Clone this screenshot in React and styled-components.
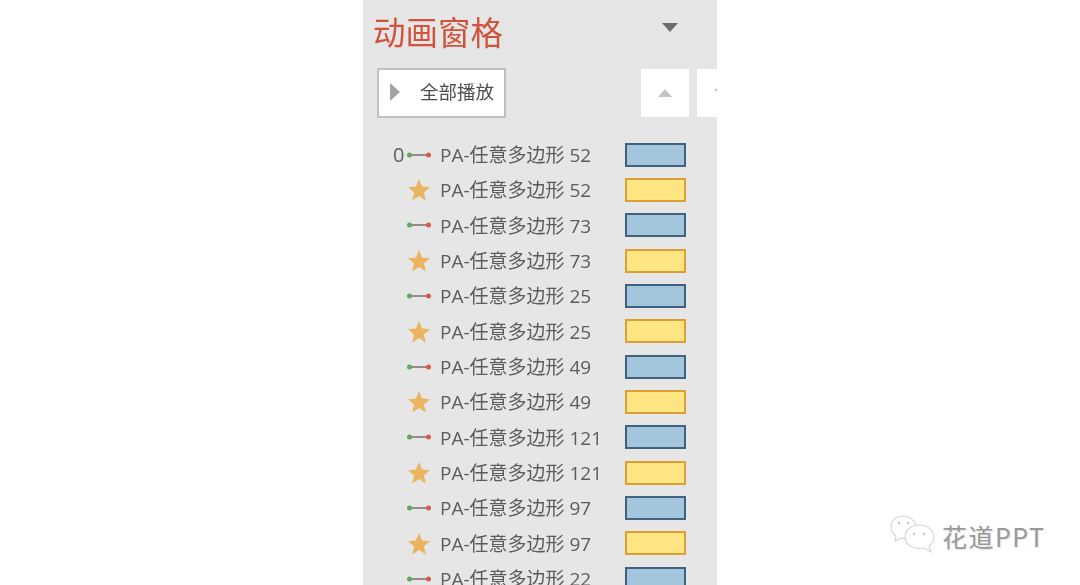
import React from "react";
import styled, { createGlobalStyle } from "styled-components";

const rows = [
  { type: "move", name: "PA-任意多边形 52", delay: "0" },
  { type: "star", name: "PA-任意多边形 52" },
  { type: "move", name: "PA-任意多边形 73" },
  { type: "star", name: "PA-任意多边形 73" },
  { type: "move", name: "PA-任意多边形 25" },
  { type: "star", name: "PA-任意多边形 25" },
  { type: "move", name: "PA-任意多边形 49" },
  { type: "star", name: "PA-任意多边形 49" },
  { type: "move", name: "PA-任意多边形 121" },
  { type: "star", name: "PA-任意多边形 121" },
  { type: "move", name: "PA-任意多边形 97" },
  { type: "star", name: "PA-任意多边形 97" },
  { type: "move", name: "PA-任意多边形 22" },
];

const PathIcon = () => (
  <svg width="24" height="8" viewBox="0 0 24 8">
    <line x1="2.500" y1="4" x2="21.500" y2="4" stroke="#6b5a55" strokeWidth="1.300" />
    <circle cx="2.500" cy="4" r="2.500" fill="#5fa85f" />
    <circle cx="21.500" cy="4" r="2.500" fill="#d9584a" />
  </svg>
);

const StarIcon = () => (
  <svg width="24" height="23" viewBox="0 0 24 23">
    <path d="M12 1l3 7.6 8 .6-6.1 5.2 1.9 8L12 17.9 5.2 22.400l1.900-8L1 9.200l8-.6z" fill="#ebb45f" />
  </svg>
);

const WeChatIcon = () => (
  <svg width="46" height="44" viewBox="0 0 46 44" fill="none" stroke="#d4d4d4" strokeWidth="1.100">
    <path d="M26 11C24 5 18 2 13 2 6 2 1 7 1 13c0 4 2 7 5 9l-1 5 6-3c2 .5 4 .6 5 .4" />
    <path d="M29 11c8 0 15 5 15 12 0 4-2 7-5 9l2 6-7-4c-1 .3-3 .4-5 .4-8 0-14-5-14-11.500S21 11 29 11z" />
    <circle cx="9" cy="9" r="1.200" fill="#c4c4c4" stroke="none" />
    <circle cx="18" cy="9" r="1.200" fill="#c4c4c4" stroke="none" />
    <circle cx="24" cy="20" r="1.200" fill="#c4c4c4" stroke="none" />
    <circle cx="34" cy="20" r="1.200" fill="#c4c4c4" stroke="none" />
  </svg>
);

const App = () => (
  <Page>
    <GlobalStyle />
    <Pane>
      <Header>
        <Title>动画窗格</Title>
        <MenuCaret />
      </Header>
      <Toolbar>
        <PlayAll>
          <PlayGlyph />
          <PlayLabel>全部播放</PlayLabel>
        </PlayAll>
        <Arrows>
          <ArrowButton>
            <ArrowUp />
          </ArrowButton>
          <ArrowButton>
            <ArrowDown />
          </ArrowButton>
        </Arrows>
      </Toolbar>
      <List>
        {rows.map((row, i) => (
          <Row key={i}>
            <Delay>{row.delay}</Delay>
            <IconCell>
              {row.type === "move" ? <PathIcon /> : <StarIcon />}
            </IconCell>
            <Name>{row.name}</Name>
            <Bar $type={row.type} />
          </Row>
        ))}
      </List>
    </Pane>
    <Watermark>
      <WeChatIcon />
      <WatermarkText>花道PPT</WatermarkText>
    </Watermark>
  </Page>
);

export default App;

const GlobalStyle = createGlobalStyle`
  html, body {
    margin: 0;
    padding: 0;
    background: #fff;
    overflow: hidden;
  }
`;

const Page = styled.div`
  position: relative;
  width: 1080px;
  height: 585px;
  overflow: hidden;
  background: #fff;
  font-family: "Open Sans", "Noto Sans CJK SC", sans-serif;
`;

const Pane = styled.div`
  width: 354px;
  height: 585px;
  margin-left: 363px;
  background: #e6e6e6;
  overflow: hidden;
  filter: blur(0.4px);
`;

const Header = styled.div`
  display: flex;
  align-items: center;
  justify-content: space-between;
  height: 64px;
  padding: 0 39px 0 10px;
`;

const Title = styled.div`
  margin-top: -2px;
  font-family: "Noto Sans CJK SC", sans-serif;
  font-size: 32.500px;
  line-height: 64px;
  color: #d2533c;
`;

const MenuCaret = styled.div`
  width: 0;
  height: 0;
  margin-bottom: 10px;
  border-left: 8px solid transparent;
  border-right: 8px solid transparent;
  border-top: 9px solid #6d6d6d;
`;

const Toolbar = styled.div`
  display: flex;
  align-items: center;
  height: 50px;
  margin-top: 4px;
  padding-left: 14px;
`;

const PlayAll = styled.div`
  display: flex;
  flex: none;
  align-items: center;
  box-sizing: border-box;
  width: 129px;
  height: 50px;
  padding-left: 11px;
  background: #fff;
  border: 2px solid #c0c0c0;
`;

const PlayGlyph = styled.div`
  flex: none;
  width: 0;
  height: 0;
  margin-bottom: 3px;
  border-top: 9px solid transparent;
  border-bottom: 9px solid transparent;
  border-left: 10px solid #a3a3a3;
`;

const PlayLabel = styled.span`
  margin-left: 20px;
  padding-bottom: 4px;
  font-family: "Noto Sans CJK SC", sans-serif;
  font-size: 18.500px;
  white-space: nowrap;
  color: #4d4d4d;
`;

const Arrows = styled.div`
  display: flex;
  flex: none;
  gap: 8px;
  margin-left: 135px;
`;

const ArrowButton = styled.div`
  display: flex;
  align-items: center;
  justify-content: center;
  flex: none;
  width: 48px;
  height: 48px;
  background: #fff;
`;

const ArrowUp = styled.div`
  width: 0;
  height: 0;
  border-left: 7px solid transparent;
  border-right: 7px solid transparent;
  border-bottom: 8px solid #c4c4c4;
`;

const ArrowDown = styled(ArrowUp)`
  border-bottom: 0;
  border-top: 8px solid #c4c4c4;
`;

const List = styled.div`
  display: flex;
  flex-direction: column;
  margin-top: 19px;
`;

const Row = styled.div`
  display: flex;
  align-items: center;
  flex: none;
  height: 35.330px;
  padding-left: 30px;
`;

const Delay = styled.span`
  width: 14px;
  padding-bottom: 1px;
  font-size: 20px;
  color: #5f5f5f;
`;

const IconCell = styled.div`
  display: flex;
  align-items: center;
  justify-content: center;
  width: 24px;
  margin-right: 9px;
`;

const Name = styled.span`
  width: 185px;
  padding-bottom: 1px;
  font-size: 19px;
  white-space: nowrap;
  color: #5c5c5c;
`;

const Bar = styled.div`
  box-sizing: border-box;
  width: 61px;
  height: 24px;
  border: 2px solid ${(p) => (p.$type === "move" ? "#3f6281" : "#dc9f36")};
  background: ${(p) => (p.$type === "move" ? "#a3c6dc" : "#ffe682")};
`;

const Watermark = styled.div`
  position: absolute;
  left: 890px;
  top: 514px;
  display: flex;
  align-items: center;
  gap: 6px;
`;

const WatermarkText = styled.span`
  font-family: "Noto Sans CJK SC", sans-serif;
  font-size: 25px;
  line-height: 44px;
  letter-spacing: 1.500px;
  color: #999;
  text-shadow: 1px 1px 1px #e2e2e2;
`;
